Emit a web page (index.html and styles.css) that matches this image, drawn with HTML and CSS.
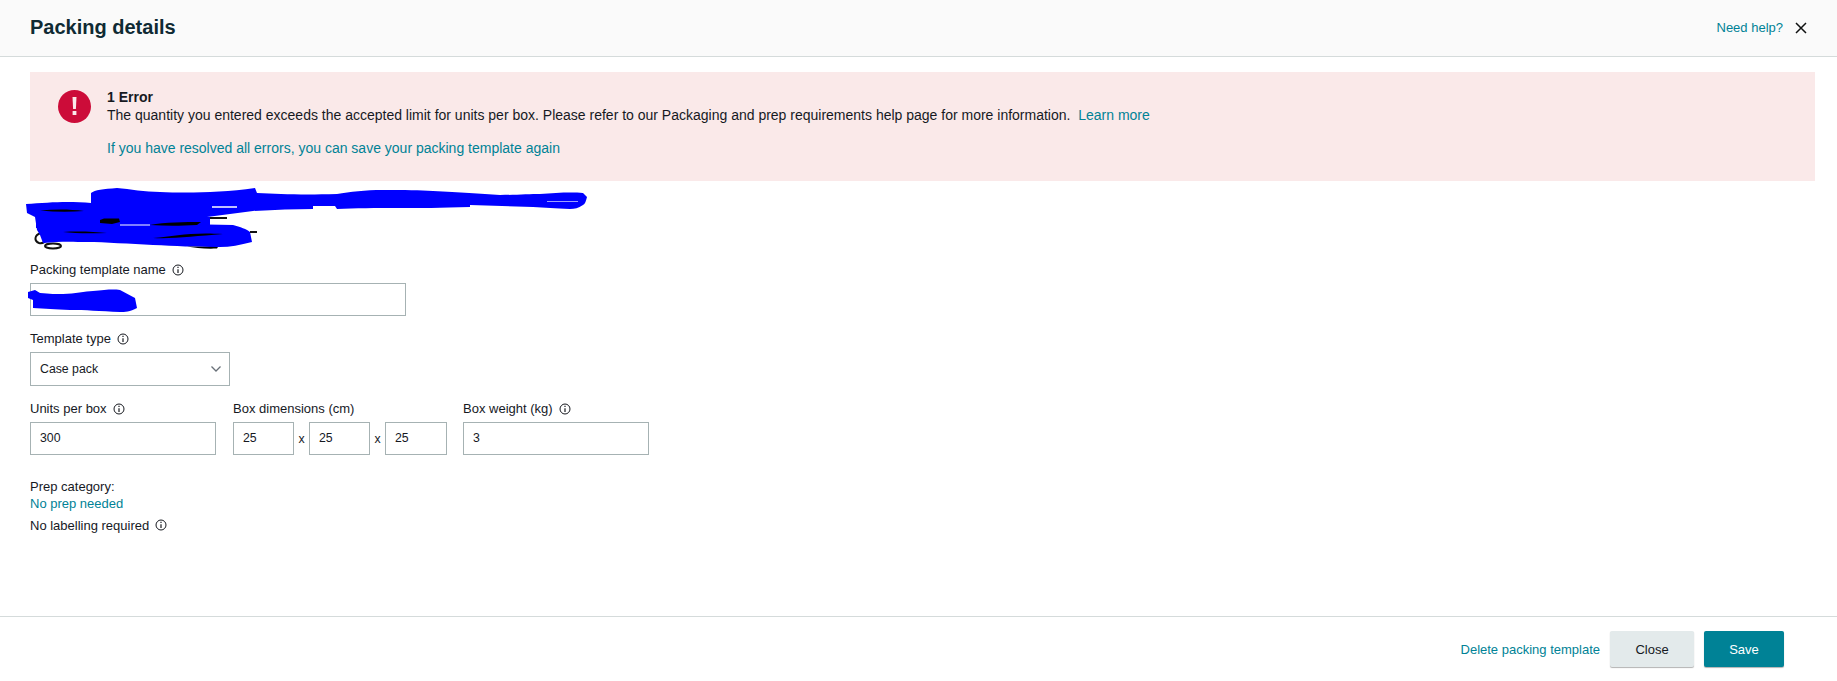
FILE: index.html
```html
<!DOCTYPE html>
<html lang="en">
<head>
<meta charset="utf-8">
<title>Packing details</title>
<link rel="stylesheet" href="styles.css">
</head>
<body>
<svg class="defs" width="0" height="0" aria-hidden="true">
  <symbol id="info" viewBox="0 0 12 12">
    <circle cx="6" cy="6" r="5" fill="none" stroke="#16191f" stroke-width="1"/>
    <path d="M6 5.2V9" stroke="#16191f" stroke-width="1.2" fill="none"/>
    <path d="M6 2.7V4" stroke="#16191f" stroke-width="1.2" fill="none"/>
  </symbol>
</svg>
<div class="page">
  <header class="header">
    <h1 class="title">Packing details</h1>
    <div class="header-actions">
      <a class="link">Need help?</a>
      <svg class="close-x" viewBox="0 0 12 12" width="12" height="12"><path d="M1 1L11 11M11 1L1 11" stroke="#0f1111" stroke-width="1.5" fill="none"/></svg>
    </div>
  </header>

  <main class="main">
    <section class="alert">
      <svg class="alert-icon" viewBox="0 0 33 33" width="33" height="33">
        <circle cx="16.5" cy="16.5" r="16.5" fill="#cc0c39"/>
        <path d="M14.5 7h4l-.6 12h-2.8z" fill="#fbe9ea"/>
        <rect x="14.6" y="21" width="3.8" height="4" fill="#fbe9ea"/>
      </svg>
      <div class="alert-body">
        <div class="alert-title">1 Error</div>
        <div>The quantity you entered exceeds the accepted limit for units per box. Please refer to our Packaging and prep requirements help page for more information.&nbsp; <a class="link">Learn more</a></div>
        <a class="link alert-resolve">If you have resolved all errors, you can save your packing template again</a>
      </div>
    </section>

    <svg class="scribble" viewBox="20 185 580 65" width="580" height="65" aria-hidden="true">
      <g fill="none" stroke="#111" stroke-width="2">
        <path d="M41 233C34 235 34 241 39 243C43 244 47 241 48 237"/>
        <ellipse cx="53" cy="246" rx="8" ry="2.4"/>
        <path d="M210 218H227M250 232H257"/>
      </g>
      <path fill="#0000ff" d="M91 193C95 190 103 189 117 188C130 189 145 192 160 192C185 193 220 193 255 188L257 193C280 194 300 195 337 194C350 192 365 190 383 190C405 190 420 190 433 191C460 192 480 194 500 195C515 195 530 194 540 194C555 193 570 192 583 193L587 197C586 201 585 204 583 205C578 208 575 209 570 209C555 208 545 208 533 207L470 205V207C440 208 420 208 400 208C375 208 355 208 337 209L335 206H313V209C295 209 275 210 253 211L207 217L190 222L120 225C160 224 200 224 233 225C240 227 247 229 250 232L252 242C240 245 230 247 220 247C195 247 175 246 153 245C130 244 105 242 87 242C75 242 63 241 43 243L40 235L37 230L35 217L27 213L26 204C40 203 55 202 67 202C75 202 84 202 91 203Z"/>
      <path fill="#0000ff" d="M36 217H210V228H36Z"/>
      <g fill="#000">
        <path d="M40 210.500C55 209 70 209 84 211C70 212 55 212 40 210.500Z"/>
        <path d="M100 220L104 218.500H119L120 222L112 224L100 223Z"/>
        <path d="M150 225C165 222 185 222 201 222L197 225C180 226 165 226 150 225Z"/>
        <path d="M63 232C80 231 95 232 107 233C90 233.500 75 233.500 63 232Z"/>
        <path d="M153 238C175 236 190 232 223 234C195 236 175 239 153 238Z"/>
        <path d="M187 246.500L218 247L217 248.500C205 249 195 248 187 246.500Z"/>
      </g>
      <path d="M120 225H150" stroke="#fff" stroke-width="1" fill="none"/>
      <path d="M212 207H237" stroke="#fff" stroke-width="1.500" fill="none"/>
      <path d="M547 201.500H578" stroke="#dfe3ff" stroke-width=".7" fill="none"/>
    </svg>

    <div class="field name-field">
      <label class="label">Packing template name <svg class="info"><use href="#info"/></svg></label>
      <div class="name-wrap">
        <div class="input name-input"></div>
        <svg class="name-scribble" viewBox="28 288 112 26" width="112" height="26" aria-hidden="true">
          <path fill="#0000ff" d="M28 292L35 290L40 293C50 294 56 294 63 294C75 294 85 291 93 291C105 290 112 289 120 290L135 298L137 308C130 312 125 312 120 312C100 311 85 310 70 310C55 309 45 309 33 308V300L28 298Z"/>
        </svg>
      </div>
    </div>

    <div class="field">
      <label class="label">Template type <svg class="info"><use href="#info"/></svg></label>
      <div class="input select">
        <span>Case pack</span>
        <svg viewBox="0 0 12 8" width="12" height="8"><path d="M1.5 1.5L6 6L10.5 1.5" stroke="#687078" stroke-width="1.3" fill="none"/></svg>
      </div>
    </div>

    <div class="row">
      <div class="field">
        <label class="label">Units per box <svg class="info"><use href="#info"/></svg></label>
        <div class="input wide">300</div>
      </div>
      <div class="field dims-field">
        <label class="label">Box dimensions (cm)</label>
        <div class="dims">
          <div class="input dim">25</div><span class="times">x</span>
          <div class="input dim">25</div><span class="times">x</span>
          <div class="input dim">25</div>
        </div>
      </div>
      <div class="field">
        <label class="label">Box weight (kg) <svg class="info"><use href="#info"/></svg></label>
        <div class="input wide">3</div>
      </div>
    </div>

    <div class="prep">
      <div>Prep category:</div>
      <a class="link">No prep needed</a>
      <div class="labelling">No labelling required <svg class="info"><use href="#info"/></svg></div>
    </div>
  </main>

  <footer class="footer">
    <a class="link">Delete packing template</a>
    <button class="btn btn-close">Close</button>
    <button class="btn btn-save">Save</button>
  </footer>
</div>
</body>
</html>
```

FILE: styles.css
```css
* { box-sizing: border-box; }
html, body { margin: 0; height: 100%; background: #fff; }
body {
  font-family: "Liberation Sans", Arial, sans-serif;
  font-size: 13px;
  line-height: 17px;
  color: #16191f;
  overflow: hidden;
}
.defs { position: absolute; }
.page { height: 681px; display: flex; flex-direction: column; }
.link { color: #008296; text-decoration: none; }

.header {
  height: 57px;
  flex: none;
  display: flex;
  align-items: center;
  justify-content: space-between;
  padding: 0 30px 1px;
  background: #fafafa;
  border-bottom: 1px solid #d5dbdb;
}
.title { margin: 0 0 2px; font-size: 20px; line-height: 24px; font-weight: 700; color: #0f2a33; }
.header-actions { display: flex; align-items: center; gap: 12px; }
.close-x { display: block; }

.main { flex: 1; padding: 15px 22px 0 30px; }

.alert {
  height: 109px;
  background: #fae9e9;
  padding: 18px 0 0 28px;
  display: flex;
  gap: 16px;
  font-size: 14px;
}
.alert-icon { flex: none; }
.alert-body { margin-top: -1px; }
.alert-title { font-weight: 700; line-height: 17px; margin-bottom: 1px; }
.alert-resolve { display: block; margin-top: 16px; }

.scribble { display: block; margin: 4px 0 0 -10px; }

.field { display: flex; flex-direction: column; }
.name-field { margin-top: 11px; }
.label { display: flex; align-items: center; gap: 6px; height: 17px; margin-bottom: 5px; }
.info { width: 12px; height: 12px; flex: none; }
.labelling .info { vertical-align: -1px; margin-left: 2px; }

.input {
  height: 33px;
  border: 1px solid #a6b2b3;
  background: #fff;
  padding: 0 9px;
  display: flex;
  align-items: center;
  font-size: 12.3px;
}
.name-wrap { position: relative; }
.name-input { width: 376px; }
.name-scribble { position: absolute; left: -2px; top: 5px; }

.name-field + .field { margin-top: 14px; }
.select { width: 200px; height: 34px; justify-content: space-between; padding-right: 7px; }

.row { display: flex; gap: 17px; margin-top: 14px; }
.wide { width: 186px; }
.dims-field { margin-right: -1px; }
.dims { display: flex; align-items: center; }
.dim { width: 61px; }
.dim:last-child { width: 62px; }
.times { width: 15px; text-align: center; padding-top: 2px; font-size: 12.3px; }

.prep { margin-top: 23px; }
.prep .link { display: block; }
.labelling { margin-top: 5px; }

.footer {
  height: 65px;
  flex: none;
  border-top: 1px solid #d5dbdb;
  display: flex;
  align-items: center;
  justify-content: flex-end;
  padding: 0 53px 0 0;
}
.btn {
  height: 36px;
  border: 0;
  border-radius: 2px;
  font-family: "Liberation Sans", Arial, sans-serif;
  font-size: 13px;
  box-shadow: 0 1px 1px rgba(0, 0, 0, .3);
}
.btn-close { width: 84px; margin-left: 10px; background: #e3eaeb; color: #16191f; }
.btn-save { width: 80px; margin-left: 10px; background: #008296; color: #fff; font-weight: 400; }
```
